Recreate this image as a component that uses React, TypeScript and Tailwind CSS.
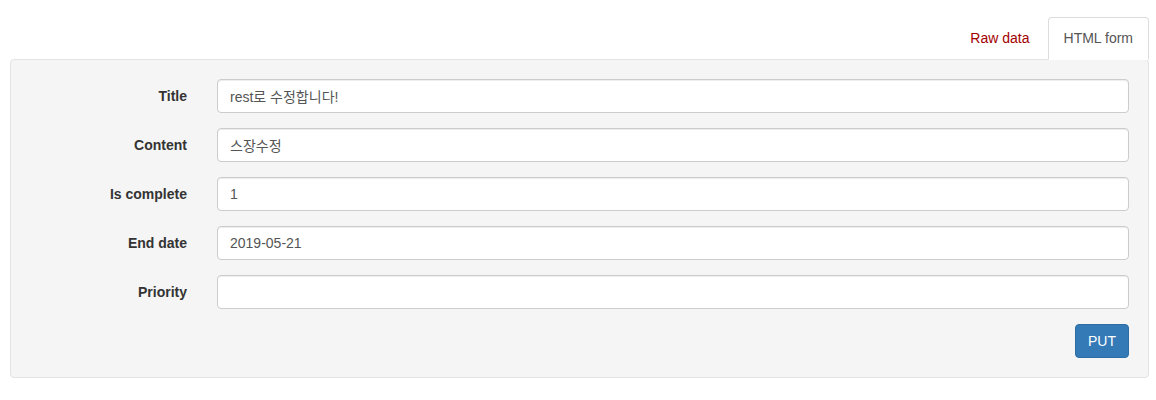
const fields = [
  { label: 'Title', value: 'rest로 수정합니다!' },
  { label: 'Content', value: '스장수정' },
  { label: 'Is complete', value: '1' },
  { label: 'End date', value: '2019-05-21' },
  { label: 'Priority', value: '' },
];

export default function App() {
  return (
    <div className="h-[400px] bg-white font-['Liberation_Sans','Noto_Sans_CJK_KR',sans-serif] text-sm text-[#333]">
      <div className="w-[1149px] pt-[17px] pl-[10px]">
        {/* Tabs */}
        <div className="flex justify-end">
          <a className="mr-[2px] border border-transparent px-[15px] py-[10px] leading-5 text-[#a30000]">Raw data</a>
          <a className="relative z-10 -mb-px rounded-t border border-[#ddd] border-b-transparent bg-white px-[15px] py-[10px] leading-5 text-[#555]">
            HTML form
          </a>
        </div>

        {/* Form well */}
        <div className="rounded border border-[#e3e3e3] bg-[#f5f5f5] p-[19px]">
          <form className="flex flex-col gap-[15px]">
            {fields.map((f) => (
              <div key={f.label} className="flex items-center">
                <label className="w-[157px] shrink-0 text-right font-bold text-[#333]">{f.label}</label>
                <input
                  readOnly
                  value={f.value}
                  className="ml-[30px] h-[34px] flex-1 rounded border border-[#ccc] bg-white px-3 text-sm text-[#555] shadow-[inset_0_1px_1px_rgba(0,0,0,0.075)] outline-none"
                />
              </div>
            ))}
            <div className="flex justify-end">
              <button
                type="button"
                className="h-[34px] rounded border border-[#2e6da4] bg-[#337ab7] px-3 text-sm text-white"
              >
                PUT
              </button>
            </div>
          </form>
        </div>
      </div>
    </div>
  );
}
